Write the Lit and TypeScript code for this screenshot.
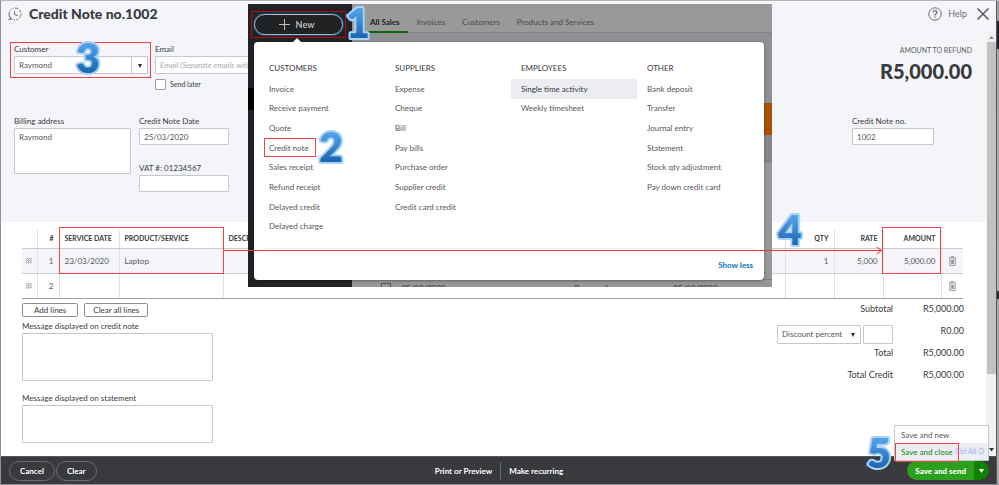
import { LitElement, html, css, svg } from "lit";
import { customElement, property } from "lit/decorators.js";

interface MenuGroup {
  title: string;
  items: string[];
}

const MENU: MenuGroup[] = [
  {
    title: "CUSTOMERS",
    items: ["Invoice", "Receive payment", "Quote", "Credit note", "Sales receipt", "Refund receipt", "Delayed credit", "Delayed charge"],
  },
  {
    title: "SUPPLIERS",
    items: ["Expense", "Cheque", "Bill", "Pay bills", "Purchase order", "Supplier credit", "Credit card credit"],
  },
  { title: "EMPLOYEES", items: ["Single time activity", "Weekly timesheet"] },
  {
    title: "OTHER",
    items: ["Bank deposit", "Transfer", "Journal entry", "Statement", "Stock qty adjustment", "Pay down credit card"],
  },
];

const LINES = [
  { date: "23/03/2020", product: "Laptop", qty: "1", rate: "5,000", amount: "5,000.00" },
  { date: "", product: "", qty: "", rate: "", amount: "" },
];

const grip = html`<svg width="6" height="6" viewBox="0 0 6 6" aria-hidden="true">
  ${[0, 2, 4].map((y) => svg`<rect x="0" y=${y} width="6" height="1" fill="#b4b6bb"/>`)}
  ${[0, 2, 4].map((x) => svg`<rect x=${x} y="0" width="1" height="6" fill="#c4c6ca"/>`)}
</svg>`;

const trash = html`<svg width="7" height="10" viewBox="0 0 7 10" aria-hidden="true">
  <path d="M0 1.900h7M2.300 1.700V.6h2.400v1.100M.8 2.200v7.200h5.400V2.200M2.400 3.600v4.400M3.500 3.600v4.400M4.600 3.600v4.400" fill="none" stroke="#7d8085" stroke-width=".8"/>
</svg>`;

/* Numbered step marker laid over the form */
@customElement("step-number")
export class StepNumber extends LitElement {
  @property() value = "";

  static styles = css`
    :host {
      position: absolute;
      z-index: 5;
      width: 26px;
      height: 36px;
      pointer-events: none;
    }
    svg {
      display: block;
      overflow: visible;
    }
    text {
      font: 800 41px Lato, "Liberation Sans", sans-serif;
      fill: url(#blue);
      stroke: #a9d3f7;
      stroke-width: 4px;
      stroke-linejoin: round;
      paint-order: stroke;
    }
  `;

  render() {
    return html`<svg width="26" height="36" viewBox="0 0 26 36">
      <defs>
        <linearGradient id="blue" x1="0" y1="0" x2="0" y2="1">
          <stop offset=".2" stop-color="#55a5ec" />
          <stop offset=".85" stop-color="#1763ad" />
        </linearGradient>
      </defs>
      <text x="13" y="32" text-anchor="middle">${this.value}</text>
    </svg>`;
  }
}

/* "+ New" menu panel */
@customElement("new-menu")
export class NewMenu extends LitElement {
  static styles = css`
    :host {
      display: block;
      position: absolute;
      z-index: 2;
      left: 248px;
      top: 4px;
      width: 524px;
      height: 283px;
      overflow: hidden;
      background: #8e9093;
      font-size: 8px;
      line-height: 10px;
    }
    a {
      color: inherit;
      text-decoration: none;
    }
    .backdrop {
      display: grid;
      grid-template-columns: 104px 1fr;
      height: 100%;
    }
    .side {
      background: linear-gradient(#202224 84px, #000 84px, #000 106px, #202224 106px);
    }
    .new-wrap {
      margin: 7px 6px 0 3px;
      padding: 2px;
      border: 1px solid #b10d10;
    }
    .new {
      display: flex;
      align-items: center;
      justify-content: center;
      gap: 6px;
      box-sizing: border-box;
      width: 100%;
      height: 21px;
      padding: 0 4px 0 0;
      border: 1px solid #b5b6b8;
      border-radius: 11px;
      background: #202224;
      box-shadow: 0 0 0 1px #0c4b7c;
      color: #bcbdbf;
      font: 700 9px Lato, sans-serif;
    }
    .content {
      display: flex;
      flex-direction: column;
      min-width: 0;
    }
    .tabs {
      display: flex;
      gap: 17px;
      box-sizing: border-box;
      height: 29px;
      padding: 0 10px;
      background: #999;
      border-bottom: 1px solid #818386;
      color: #47484b;
    }
    .tabs a {
      padding-top: 13px;
    }
    .tabs .active {
      margin-right: -8px;
      padding: 13px 8px 0;
      box-sizing: border-box;
      height: 29px;
      border-bottom: 2px solid #0f6412;
      color: #1f2022;
      font-weight: 700;
    }
    .banner {
      height: 32px;
      margin-top: 70px;
      background: #a65200;
    }
    .filters {
      height: 28px;
      background: #85878b;
    }
    .rows {
      flex: 1;
      background: #979797;
      border-bottom: 1px solid #808080;
    }
    .peek {
      display: flex;
      align-items: flex-start;
      height: 7px;
      overflow: hidden;
      background: #979797;
      color: #333;
    }
    .peek input {
      appearance: none;
      width: 11px;
      height: 11px;
      margin: 3px 10px 0 29px;
      border: 1px solid #555;
    }
    .peek span {
      padding-top: 3px;
      width: 106px;
    }
    .peek .date {
      width: 186px;
    }
    .panel {
      position: absolute;
      left: 6px;
      top: 38px;
      right: 8px;
      bottom: 7px;
      display: flex;
      flex-direction: column;
      border-radius: 4px;
      background: #fff;
      box-shadow: 0 1px 3px rgba(0, 0, 0, 0.35);
      color: #55575b;
    }
    .caret {
      position: absolute;
      left: 39px;
      top: -4px;
      border: 4px solid transparent;
      border-top: 0;
      border-bottom-color: #fff;
    }
    .groups {
      display: grid;
      grid-template-columns: repeat(3, 121px) 1fr;
      gap: 5px;
      margin: 0 10px;
      padding: 21px 0 12px 0;
      border-bottom: 1px solid #eceef1;
    }
    h2 {
      margin: 0 0 6px 5px;
      color: #393a3d;
      font: 400 8px/10px Lato, sans-serif;
    }
    ul {
      display: grid;
      grid-template-rows: repeat(8, 1fr);
      height: 157px;
      margin: 0;
      padding: 0;
      list-style: none;
    }
    li {
      display: flex;
      align-items: center;
      padding-left: 5px;
    }
    li.hover {
      padding-left: 10px;
      margin-left: -5px;
      background: #ebedf2;
      color: #393a3d;
    }
    li.marked {
      position: relative;
    }
    li.marked::after {
      content: "";
      position: absolute;
      left: 0;
      top: 0;
      width: 50px;
      height: 17px;
      border: 1px solid #f04346;
    }
    .less {
      align-self: flex-end;
      margin: 11px 11px 0 0;
      color: #0077c5;
      font-weight: 700;
    }
  `;

  render() {
    return html`
      <div class="backdrop">
        <div class="side">
          <div class="new-wrap">
            <button class="new">
              <svg width="11" height="11" viewBox="0 0 11 11" aria-hidden="true">
                <path d="M5.500 0v11M0 5.500h11" stroke="#bcbdbf" />
              </svg>
              New
            </button>
          </div>
        </div>
        <div class="content">
          <nav class="tabs">
            <a class="active" href="#all">All Sales</a>
            <a href="#invoices">Invoices</a>
            <a href="#customers">Customers</a>
            <a href="#products">Products and Services</a>
          </nav>
          <div class="banner"></div>
          <div class="filters"></div>
          <div class="rows"></div>
          <div class="peek">
            <input type="checkbox" aria-label="Select sale" />
            <span class="date">25/03/2020</span><span>Raymond</span><span>25/03/2020</span>
          </div>
        </div>
      </div>
      <div class="panel">
        <div class="caret"></div>
        <div class="groups">
          ${MENU.map(
            (g) => html`<section>
              <h2>${g.title}</h2>
              <ul>
                ${g.items.map(
                  (i) => html`<li class=${i === "Credit note" ? "marked" : i === "Single time activity" ? "hover" : ""}>
                    <a href="#new">${i}</a>
                  </li>`
                )}
              </ul>
            </section>`
          )}
        </div>
        <a class="less" href="#less">Show less</a>
      </div>
    `;
  }
}

@customElement("app-root")
export class AppRoot extends LitElement {
  static styles = css`
    :host {
      display: block;
      position: relative;
      color: #393a3d;
      font: 400 8px/10px Lato, "Liberation Sans", sans-serif;
    }
    * {
      box-sizing: border-box;
    }
    .page {
      display: grid;
      grid-template-columns: 1fr 3px;
      min-height: 100vh;
      border-left: 1px solid #8f9093;
      border-top: 1px solid #b9b5bd;
      border-bottom: 1px solid #8f9093;
    }
    .edge {
      border-left: 1px solid #55565a;
      background: linear-gradient(#a0a0a3 20px, #222326 20px, #222326 48px, #a9a9ac 48px, #b5b5b8 290px, #26272a 290px, #26272a 298px, #a9a9ac 298px);
    }
    .form {
      display: flex;
      flex-direction: column;
      min-width: 0;
    }
    .top {
      display: flex;
      align-items: center;
      height: 30px;
      padding: 0 7px 4px 7px;
      background: #f4f5f8;
    }
    h1 {
      flex: 1;
      margin: 0 0 0 7px;
      font: 900 14px/18px Lato, sans-serif;
    }
    .icon-button {
      display: flex;
      align-items: center;
      gap: 6px;
      margin-left: 10px;
      padding: 0;
      border: 0;
      background: none;
      color: #6b6c72;
      font: 400 9px/12px Lato, sans-serif;
    }
    .body {
      flex: 1;
      display: grid;
      grid-template-columns: 1fr 10px;
    }
    .scroll {
      display: flex;
      flex-direction: column;
      align-items: center;
      justify-content: space-between;
      padding: 4px 0;
      background: #f1f1f1;
    }
    .thumb {
      flex: 1;
      width: 9px;
      margin: 3px 0 74px;
      background: #c1c1c1;
    }
    .head {
      position: relative;
      display: flex;
      justify-content: space-between;
      height: 191px;
      padding: 14px 14px 0 13px;
      background: #f4f5f8;
    }
    .row {
      display: flex;
      align-items: flex-start;
      gap: 7px;
    }
    .row.second {
      gap: 8px;
      margin-top: 27px;
    }
    .field {
      display: flex;
      flex-direction: column;
      gap: 2px;
    }
    label {
      line-height: 9px;
    }
    input,
    textarea,
    select {
      display: block;
      margin: 0;
      padding: 0 4px;
      border: 1px solid #c3c7ce;
      border-radius: 1px;
      background: #fff;
      color: #55575b;
      font: 400 8px/10px Lato, sans-serif;
      appearance: none;
      resize: none;
      outline: 0;
    }
    textarea {
      padding: 3px 4px;
    }
    input::placeholder {
      color: #a9abb2;
      font-style: italic;
    }
    .marked {
      position: relative;
    }
    .marked::before {
      content: "";
      position: absolute;
      inset: -3px -3px -4px -4px;
      border: 1px solid #f04346;
    }
    .combo {
      position: relative;
      display: block;
    }
    .combo::after {
      content: "";
      position: absolute;
      right: 6px;
      top: 8px;
      border: 2px solid transparent;
      border-top: 4px solid #2c2d30;
      border-bottom: 0;
      pointer-events: none;
    }
    .customer::before {
      content: "";
      position: absolute;
      right: 16px;
      top: 1px;
      bottom: 1px;
      border-left: 1px solid #c3c7ce;
    }
    .customer select {
      width: 134px;
      height: 18px;
    }
    .email {
      width: 165px;
      height: 18px;
    }
    .later {
      display: flex;
      align-items: center;
      gap: 4px;
      margin-top: 3px;
      font-size: 7px;
    }
    .later input {
      width: 11px;
      height: 11px;
      padding: 0;
      border-color: #9a9da3;
    }
    .billing {
      width: 117px;
      height: 46px;
    }
    .date {
      width: 90px;
      height: 17px;
    }
    .vat {
      margin-top: 19px;
    }
    .refund {
      text-align: right;
    }
    .refund p {
      margin: 0;
    }
    .refund .caption {
      color: #5b5d62;
      font-size: 7px;
    }
    .refund .total {
      margin-top: 4px;
      font: 900 20px/24px Lato, sans-serif;
    }
    .number {
      margin: 34px 0 0 0;
      align-items: flex-start;
      width: 120px;
    }
    .number input {
      width: 82px;
      height: 17px;
    }
    .lines {
      position: relative;
      margin: 8px 23px 0 21px;
    }
    table {
      width: 100%;
      table-layout: fixed;
      border-collapse: collapse;
    }
    th,
    td {
      height: 25px;
      padding: 0 5px;
      border-right: 1px solid #dfe1e6;
      border-bottom: 1px solid #c9ccd2;
      text-align: left;
      white-space: nowrap;
    }
    th {
      height: 18px;
      font: 700 7px/9px Lato, sans-serif;
    }
    td {
      color: #55575b;
    }
    tr > :last-child {
      border-right: 0;
      text-align: center;
    }
    tr > :first-child {
      text-align: center;
    }
    tbody tr:first-child {
      background: #f4f5f8;
    }
    tbody tr:last-child td {
      border-bottom-color: #9b9ea4;
    }
    tr > .num {
      text-align: right;
    }
    td svg {
      display: block;
      margin: auto;
    }
    .w-grip { width: 15px; }
    .w-index { width: 22px; }
    .w-date { width: 60px; }
    .w-product { width: 104px; }
    .w-qty { width: 49px; }
    .w-amount { width: 58px; }
    .w-trash { width: 22px; }
    td:first-child,
    td:last-child {
      padding: 0;
    }
    .box {
      position: absolute;
      z-index: 4;
      top: -3px;
      height: 47px;
      border: 1px solid #f04346;
    }
    .box.left {
      left: 37px;
      width: 165px;
    }
    .box.right {
      right: 22px;
      width: 59px;
    }
    .arrow {
      position: absolute;
      z-index: 4;
      left: 202px;
      right: 81px;
      top: 20px;
      border-top: 1px solid #f03538;
    }
    .arrow svg {
      position: absolute;
      right: 0;
      top: -5px;
    }
    .below {
      display: flex;
      justify-content: space-between;
      padding: 4px 22px 13px 21px;
    }
    .actions {
      display: flex;
      gap: 6px;
      margin-bottom: 5px;
    }
    .small {
      height: 14px;
      padding: 0 11px;
      border: 1px solid #8d9096;
      border-radius: 2px;
      background: #fff;
      color: #393a3d;
      font: 400 8px/10px Lato, sans-serif;
      white-space: nowrap;
    }
    .small.wide {
      padding: 0 8px;
    }
    .message {
      width: 191px;
      height: 48px;
    }
    .statement {
      margin-top: 13px;
    }
    .statement .message {
      height: 38px;
    }
    .totals {
      display: grid;
      grid-template-columns: auto 71px;
      grid-auto-rows: 22px;
      margin: 0;
      font-size: 9px;
      line-height: 12px;
      text-align: right;
    }
    .totals dt,
    .totals dd {
      margin: 0;
    }
    .discount {
      display: flex;
      gap: 2px;
      margin-top: -3px;
    }
    .discount select {
      width: 84px;
      height: 19px;
    }
    .discount input {
      width: 30px;
      height: 19px;
    }
    .bar {
      position: relative;
      display: grid;
      grid-template-columns: 1fr auto 1fr;
      align-items: center;
      height: 28px;
      padding: 0 7px 0 8px;
      border-top: 1px solid #55565a;
      background: #393a3d;
      color: #fff;
    }
    .bar button {
      font: 700 8px/10px Lato, sans-serif;
      color: #fff;
    }
    .pills {
      display: flex;
      gap: 1px;
    }
    .pills button {
      height: 20px;
      padding: 0 10px;
      border: 1px solid #6b6c72;
      border-radius: 10px;
      background: none;
    }
    .links {
      display: flex;
      align-items: center;
    }
    .links button {
      padding: 4px 8px;
      border: 0;
      background: none;
    }
    .links button + button {
      border-left: 1px solid #6b6c72;
    }
    .save {
      display: flex;
      justify-self: end;
    }
    .save button {
      height: 19px;
      padding: 0 8px;
      border: 0;
      border-radius: 10px 0 0 10px;
      background: #2ca01c;
      font-weight: 900;
    }
    .save .more {
      width: 15px;
      padding: 0 5px;
      border-radius: 0 10px 10px 0;
      background: #108000;
    }
    .save .more svg {
      display: block;
    }
    .menu {
      position: absolute;
      z-index: 3;
      right: 7px;
      bottom: 23px;
      width: 95px;
      border: 1px solid #c3c7ce;
      border-radius: 1px;
      background: #fff;
    }
    .menu button {
      display: flex;
      justify-content: space-between;
      align-items: center;
      width: 100%;
      height: 17px;
      padding: 0 4px 0 6px;
      border: 0;
      background: none;
      color: #55575b;
      font: 400 8px/10px Lato, sans-serif;
      white-space: nowrap;
    }
    .menu .close {
      position: relative;
      background: #ebedf3;
      color: #108000;
    }
    .menu .close::after {
      content: "";
      position: absolute;
      left: 0;
      top: 0;
      width: 62px;
      height: 17px;
      border: 1px solid #f04346;
    }
    .menu kbd {
      color: #a3b5ea;
      font: 400 7px/9px Lato, sans-serif;
    }
    .s1 { left: 345px; top: 6px; }
    .s2 { left: 318px; top: 130px; }
    .s3 { left: 75px; top: 41px; }
    .s4 { right: 196px; top: 213px; }
    .s5 { right: 107px; bottom: 13px; }
  `;

  render() {
    return html`
      <div class="page">
        <div class="form">
          <header class="top">
            <svg width="14" height="14" viewBox="0 0 14 14" fill="none" stroke="#6b6c72" aria-hidden="true">
              <path d="M2.200 10.800A6 6 0 0 0 7 13M7 1a6 6 0 0 1 5.700 7.800" stroke-dasharray="3.200 1.300" />
              <path d="M12.400 9.400A6 6 0 0 1 7 13M1 7a6 6 0 0 1 4.600-5.800" stroke-dasharray="2 1.400" />
              <path d="M1 7c0 1.600.5 2.800 1.500 4M.3 12.600l2.500-.3L2.600 9.800M6.600 4v3.500l3.300 1.200" />
            </svg>
            <h1>Credit Note no.1002</h1>
            <button class="icon-button">
              <svg width="14" height="14" viewBox="0 0 14 14" fill="none" stroke="#6b6c72" aria-hidden="true">
                <circle cx="7" cy="7" r="6.200" />
                <path d="M5.200 5.500c0-2.500 3.700-2.300 3.700-.1C8.900 6.800 7 6.900 7 8.400M7 9.500v1.200" stroke-width="1.300" />
              </svg>
              Help
            </button>
            <button class="icon-button" aria-label="Close">
              <svg width="12" height="12" viewBox="0 0 12 12" aria-hidden="true">
                <path d="M.5.5l11 11M11.500.5l-11 11" stroke="#55575b" stroke-width="1.500" />
              </svg>
            </button>
          </header>

          <div class="body">
            <main>
              <section class="head">
                <div>
                  <div class="row">
                    <div class="field marked">
                      <label for="customer">Customer</label>
                      <span class="combo customer">
                        <select id="customer"><option>Raymond</option></select>
                      </span>
                    </div>
                    <div class="field">
                      <label for="email">Email</label>
                      <input id="email" class="email" placeholder="Email (Separate emails with a comma)" />
                      <label class="later"><input type="checkbox" />Send later</label>
                    </div>
                  </div>
                  <div class="row second">
                    <div class="field">
                      <label for="billing">Billing address</label>
                      <textarea id="billing" class="billing" .value=${"Raymond"}></textarea>
                    </div>
                    <div>
                      <div class="field">
                        <label for="date">Credit Note Date</label>
                        <input id="date" class="date" .value=${"25/03/2020"} />
                      </div>
                      <div class="field vat">
                        <label for="vat">VAT #: 01234567</label>
                        <input id="vat" class="date" />
                      </div>
                    </div>
                  </div>
                </div>
                <div class="refund">
                  <p class="caption">AMOUNT TO REFUND</p>
                  <p class="total">R5,000.00</p>
                  <div class="field number">
                    <label for="number">Credit Note no.</label>
                    <input id="number" .value=${"1002"} />
                  </div>
                </div>
              </section>

              <div class="lines">
                <table>
                  <thead>
                    <tr>
                      <th class="w-grip"></th>
                      <th class="w-index num">#</th>
                      <th class="w-date">SERVICE DATE</th>
                      <th class="w-product">PRODUCT/SERVICE</th>
                      <th>DESCRIPTION</th>
                      <th class="w-qty num">QTY</th>
                      <th class="w-qty num">RATE</th>
                      <th class="w-amount num">AMOUNT</th>
                      <th class="w-trash"></th>
                    </tr>
                  </thead>
                  <tbody>
                    ${LINES.map(
                      (l, i) => html`<tr>
                        <td>${grip}</td>
                        <td class="num">${i + 1}</td>
                        <td>${l.date}</td>
                        <td>${l.product}</td>
                        <td></td>
                        <td class="num">${l.qty}</td>
                        <td class="num">${l.rate}</td>
                        <td class="num">${l.amount}</td>
                        <td>${trash}</td>
                      </tr>`
                    )}
                  </tbody>
                </table>
                <div class="box left"></div>
                <div class="box right"></div>
                <div class="arrow">
                  <svg width="6" height="9" viewBox="0 0 6 9" aria-hidden="true">
                    <path d="M.5 1l5 3.500-5 3.500" fill="none" stroke="#f03538" />
                  </svg>
                </div>
              </div>

              <section class="below">
                <div>
                  <div class="actions">
                    <button class="small">Add lines</button>
                    <button class="small wide">Clear all lines</button>
                  </div>
                  <div class="field">
                    <label for="note-message">Message displayed on credit note</label>
                    <textarea id="note-message" class="message"></textarea>
                  </div>
                  <div class="field statement">
                    <label for="statement-message">Message displayed on statement</label>
                    <textarea id="statement-message" class="message"></textarea>
                  </div>
                </div>
                <dl class="totals">
                  <dt>Subtotal</dt>
                  <dd>R5,000.00</dd>
                  <dt class="discount">
                    <span class="combo">
                      <select aria-label="Discount type"><option>Discount percent</option></select>
                    </span>
                    <input aria-label="Discount value" />
                  </dt>
                  <dd>R0.00</dd>
                  <dt>Total</dt>
                  <dd>R5,000.00</dd>
                  <dt>Total Credit</dt>
                  <dd>R5,000.00</dd>
                </dl>
              </section>
            </main>
            <div class="scroll" aria-hidden="true">
              <svg width="5" height="4" viewBox="0 0 5 4"><path d="M0 4l2.500-3L5 4z" fill="#8b8b8b" /></svg>
              <div class="thumb"></div>
              <svg width="5" height="4" viewBox="0 0 5 4"><path d="M0 0l2.500 3.500L5 0z" fill="#333" /></svg>
            </div>
          </div>

          <footer class="bar">
            <div class="pills"><button>Cancel</button><button>Clear</button></div>
            <div class="links"><button>Print or Preview</button><button>Make recurring</button></div>
            <div class="save">
              <button>Save and send</button>
              <button class="more" aria-label="More save options">
                <svg width="5" height="4" viewBox="0 0 5 4"><path d="M0 0l2.500 4L5 0z" fill="#fff" /></svg>
              </button>
            </div>
            <div class="menu">
              <button>Save and new</button>
              <button class="close">Save and close <kbd>Ctrl Alt D</kbd></button>
            </div>
          </footer>
        </div>
        <div class="edge"></div>
      </div>

      <new-menu></new-menu>
      <step-number class="s1" value="1"></step-number>
      <step-number class="s2" value="2"></step-number>
      <step-number class="s3" value="3"></step-number>
      <step-number class="s4" value="4"></step-number>
      <step-number class="s5" value="5"></step-number>
    `;
  }
}
